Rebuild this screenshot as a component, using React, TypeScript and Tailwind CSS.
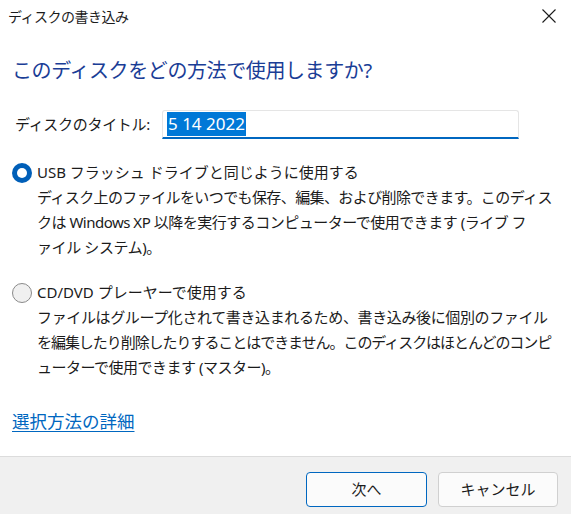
import React from 'react';

const font = { fontFamily: '"Noto Sans", "Noto Sans CJK JP", sans-serif' };

const Radio: React.FC<{ checked?: boolean }> = ({ checked }) =>
  checked ? (
    <span className="w-[20px] h-[20px] rounded-full bg-[#005fb8] flex items-center justify-center shrink-0">
      <span className="w-[10px] h-[10px] rounded-full bg-white" />
    </span>
  ) : (
    <span className="w-[20px] h-[20px] rounded-full bg-[#f0f0f0] border border-[#8a8a8a] shrink-0" />
  );

interface Line {
  text: string;
  cls: string;
}

interface OptionProps {
  checked?: boolean;
  label: string;
  lines: Line[];
}

const Option: React.FC<OptionProps> = ({ checked, label, lines }) => (
  <div className="flex flex-col">
    <div className="flex items-center h-[25px] pl-[12px]">
      <Radio checked={checked} />
      <span className="ml-[5px] text-[15px] leading-[25px] text-[#1b1b1b] whitespace-nowrap">{label}</span>
    </div>
    <div className="pl-[37px] text-[15px] leading-[25px] text-[#1b1b1b]">
      {lines.map((l) => (
        <div key={l.text} className={'whitespace-nowrap ' + l.cls}>{l.text}</div>
      ))}
    </div>
  </div>
);

export default function App() {
  return (
    <div className="w-[571px] h-[514px] bg-white flex flex-col overflow-hidden" style={font}>
      {/* title bar */}
      <div className="h-[36px] flex items-start justify-between">
        <span className="pl-[8px] pt-[7px] text-[14px] leading-[20px] tracking-[-0.5px] text-[#1b1b1b]">ディスクの書き込み</span>
        <svg width="14" height="14" viewBox="0 0 14 14" className="mt-[9px] mr-[15px]">
          <path d="M0.5 0.5 L13.5 13.5 M13.5 0.5 L0.5 13.5" stroke="#1b1b1b" strokeWidth="1.1" fill="none" />
        </svg>
      </div>

      <h1 className="mt-[21px] pl-[12px] text-[20px] leading-[28px] tracking-[-0.4px] text-[#1a3d96] font-normal">
        このディスクをどの方法で使用しますか?
      </h1>

      <div className="mt-[25px] flex items-center pl-[15px]">
        <span className="w-[147px] text-[15px] tracking-[-0.3px] text-[#1b1b1b]">ディスクのタイトル:</span>
        <div className="w-[357px] h-[29px] bg-white border border-[#e5e5e5] border-b-2 border-b-[#0067c0] rounded-t-[3px] flex items-center pl-[4px]">
          <span className="bg-[#0078d7] text-white text-[17px] leading-[24px] px-[1px]">5 14 2022</span>
        </div>
      </div>

      <div className="mt-[21px]">
        <Option
          checked
          label="USB フラッシュ ドライブと同じように使用する"
          lines={[
            { text: 'ディスク上のファイルをいつでも保存、編集、および削除できます。このディス', cls: 'tracking-[-0.6px]' },
            { text: 'クは Windows XP 以降を実行するコンピューターで使用できます (ライブ フ', cls: 'tracking-[-0.5px]' },
            { text: 'ァイル システム)。', cls: 'tracking-[-0.4px]' },
          ]}
        />
      </div>

      <div className="mt-[20px]">
        <Option
          label="CD/DVD プレーヤーで使用する"
          lines={[
            { text: 'ファイルはグループ化されて書き込まれるため、書き込み後に個別のファイル', cls: 'tracking-[-0.37px]' },
            { text: 'を編集したり削除したりすることはできません。このディスクはほとんどのコンピ', cls: 'tracking-[-1.05px]' },
            { text: 'ューターで使用できます (マスター)。', cls: 'tracking-[-0.5px]' },
          ]}
        />
      </div>

      <div className="mt-[28px] pl-[12px]">
        <a className="text-[17.5px] leading-[26px] text-[#0067c0] underline underline-offset-[3px] cursor-pointer">選択方法の詳細</a>
      </div>

      <div className="flex-1" />

      <div className="h-[58px] bg-[#f0f0f0] border-t border-[#dcdcdc] flex items-start justify-end pt-[15px] pr-[13px] gap-[11px]">
        <button className="w-[121px] h-[35px] rounded-[4px] bg-[#fbfbfb] border border-[#0067c0] text-[15px] text-[#1b1b1b]">次へ</button>
        <button className="w-[120px] h-[35px] rounded-[4px] bg-[#fbfbfb] border border-[#d0d0d0] text-[15px] text-[#1b1b1b]">キャンセル</button>
      </div>
    </div>
  );
}
